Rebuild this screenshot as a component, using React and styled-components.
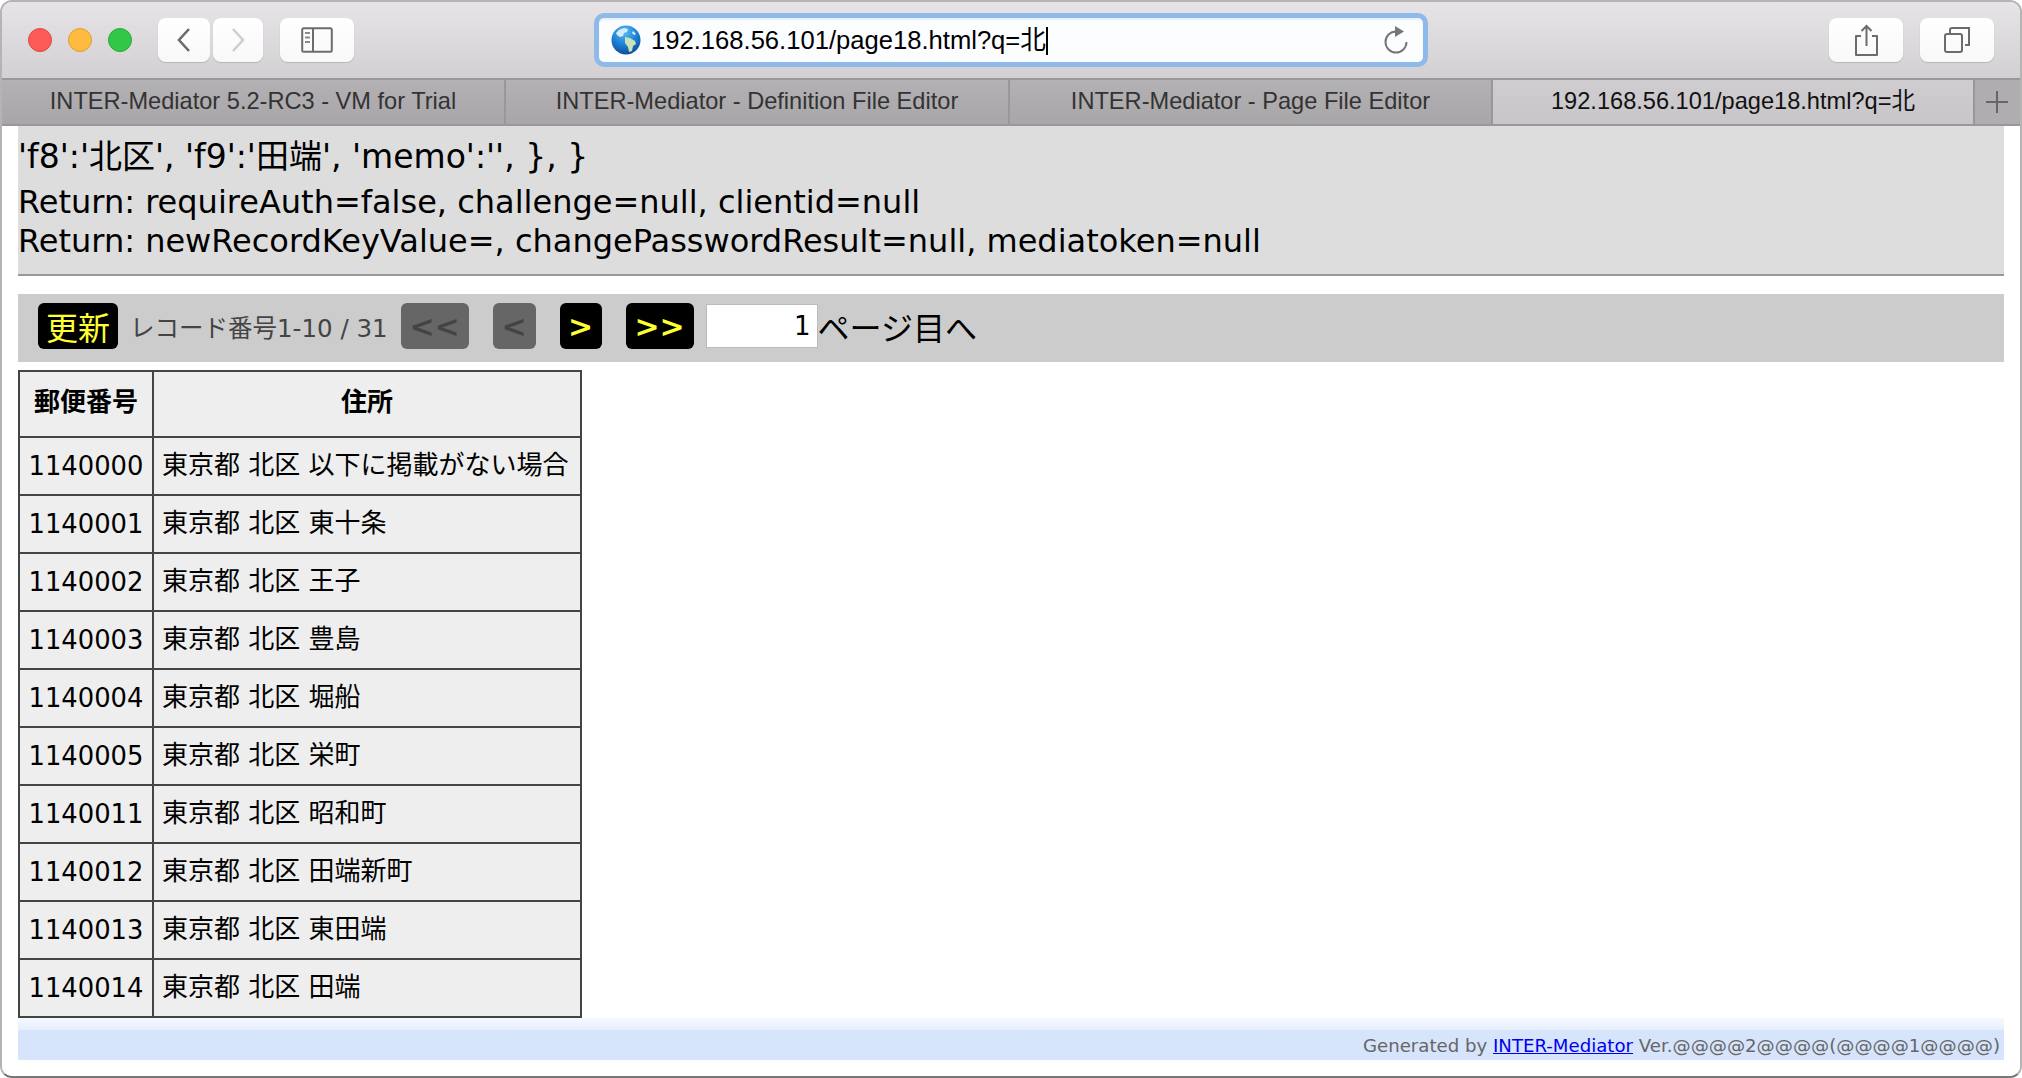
import React from "react";
import styled, { createGlobalStyle } from "styled-components";

const rows = [
  ["1140000", "東京都 北区 以下に掲載がない場合"],
  ["1140001", "東京都 北区 東十条"],
  ["1140002", "東京都 北区 王子"],
  ["1140003", "東京都 北区 豊島"],
  ["1140004", "東京都 北区 堀船"],
  ["1140005", "東京都 北区 栄町"],
  ["1140011", "東京都 北区 昭和町"],
  ["1140012", "東京都 北区 田端新町"],
  ["1140013", "東京都 北区 東田端"],
  ["1140014", "東京都 北区 田端"],
];

const tabs = [
  { title: "INTER-Mediator 5.2-RC3 - VM for Trial", width: 504 },
  { title: "INTER-Mediator - Definition File Editor", width: 504 },
  { title: "INTER-Mediator - Page File Editor", width: 483 },
  { title: "192.168.56.101/page18.html?q=北", width: 482, active: true },
];

function Globe() {
  return (
    <svg width="30" height="30" viewBox="0 0 30 30">
      <defs>
        <radialGradient id="sea" cx="45%" cy="22%" r="85%">
          <stop offset="0" stopColor="#58bdf5" />
          <stop offset="0.55" stopColor="#1a7cd4" />
          <stop offset="1" stopColor="#0b4488" />
        </radialGradient>
      </defs>
      <circle cx="15" cy="15" r="14.5" fill="url(#sea)" />
      <path d="M8 5c3-2 7-2 9-1l-1 3-3 1-1 3-3 1-3-2-1-2z" fill="#d8ecf8" />
      <path d="M14 12l5 1 5 3 1 3-3 2-1 5-3 1-1-5-3-4z" fill="#c9e2b8" />
      <path d="M22 6l3 3-2 1-2-2z" fill="#d8ecf8" />
    </svg>
  );
}

export default function App() {
  return (
    <>
      <GlobalStyle />
      <Window>
        <TitleBar>
          <Lights>
            <Light color="#fc5b57" edge="#df4744" />
            <Light color="#fdbb40" edge="#de9f34" />
            <Light color="#33c748" edge="#27aa35" />
          </Lights>
          <NavGroup>
            <ToolButton width="52px">
              <svg width="20" height="30" viewBox="0 0 20 30">
                <path d="M15 4 5 15l10 11" fill="none" stroke="#6c6c6c" strokeWidth="2.6" />
              </svg>
            </ToolButton>
            <ToolButton width="50px">
              <svg width="20" height="30" viewBox="0 0 20 30">
                <path d="M5 4l10 11L5 26" fill="none" stroke="#cfcfcf" strokeWidth="2.6" />
              </svg>
            </ToolButton>
          </NavGroup>
          <ToolButton width="74px">
            <svg width="32" height="26" viewBox="0 0 32 26">
              <rect x="1.200" y="1.200" width="29.600" height="23.600" rx="1.500" fill="none" stroke="#6c6c6c" strokeWidth="2" />
              <path d="M12 1v24" stroke="#6c6c6c" strokeWidth="2" />
              <path d="M4 6h5M4 10.500h5M4 15h5" stroke="#8a8a8a" strokeWidth="2" />
            </svg>
          </ToolButton>
          <AddressBar>
            <Globe />
            <AddressText>192.168.56.101/page18.html?q=北<Caret /></AddressText>
            <svg width="26" height="30" viewBox="0 0 26 30">
              <path d="M13 6.500A10.500 10.500 0 1 0 23.500 17" fill="none" stroke="#777" strokeWidth="2" />
              <path d="M12 1v11l9-5.500z" fill="#777" />
            </svg>
          </AddressBar>
          <RightTools>
            <ToolButton width="74px">
              <svg width="24" height="32" viewBox="0 0 24 32">
                <path d="M7 12H2v19h21V12h-5" fill="none" stroke="#6c6c6c" strokeWidth="2" strokeLinejoin="round" />
                <path d="M12.500 22V2M7.500 7l5-5 5 5" fill="none" stroke="#6c6c6c" strokeWidth="2" />
              </svg>
            </ToolButton>
            <ToolButton width="74px">
              <svg width="26" height="26" viewBox="0 0 26 26">
                <rect x="1" y="7" width="17" height="18" rx="2" fill="none" stroke="#6c6c6c" strokeWidth="2" />
                <path d="M6 6V3q0-2 2-2h17v17h-4" fill="none" stroke="#6c6c6c" strokeWidth="2" />
              </svg>
            </ToolButton>
          </RightTools>
        </TitleBar>
        <TabBar>
          {tabs.map((tab) => (
            <Tab key={tab.title} width={tab.width} $active={tab.active}>
              {tab.title}
            </Tab>
          ))}
          <NewTab>
            <svg width="22" height="22" viewBox="0 0 22 22">
              <path d="M11 0v22M0 11h22" stroke="#666" strokeWidth="2" />
            </svg>
          </NewTab>
        </TabBar>
        <Page>
          <DebugPanel>
            <DebugFirst>'f8':'北区', 'f9':'田端', 'memo':'', }, }</DebugFirst>
            <DebugLine>Return: requireAuth=false, challenge=null, clientid=null</DebugLine>
            <DebugLine>Return: newRecordKeyValue=, changePasswordResult=null, mediatoken=null</DebugLine>
          </DebugPanel>
          <Navigator>
            <NavButton $wide="80px" $large>更新</NavButton>
            <RecordInfo>レコード番号1-10 / 31</RecordInfo>
            <NavButton $wide="68px" $off>&lt;&lt;</NavButton>
            <NavButton $wide="43px" $off $gap="24px">&lt;</NavButton>
            <NavButton $wide="42px" $gap="24px">&gt;</NavButton>
            <NavButton $wide="68px" $gap="24px">&gt;&gt;</NavButton>
            <PageInput defaultValue="1" />
            <PageLabel>ページ目へ</PageLabel>
          </Navigator>
          <Grid>
            <thead>
              <tr>
                <HeadCell $first>郵便番号</HeadCell>
                <HeadCell>住所</HeadCell>
              </tr>
            </thead>
            <tbody>
              {rows.map(([zip, address]) => (
                <tr key={zip}>
                  <ZipCell>{zip}</ZipCell>
                  <AddressCell>{address}</AddressCell>
                </tr>
              ))}
            </tbody>
          </Grid>
          <Footer>
            Generated by <FooterLink href="#">INTER-Mediator</FooterLink> Ver.@@@@2@@@@(@@@@1@@@@)
          </Footer>
        </Page>
      </Window>
    </>
  );
}

const GlobalStyle = createGlobalStyle`
  html, body {
    margin: 0;
    padding: 0;
    background: #ffffff;
  }
  * {
    box-sizing: border-box;
  }
`;

const Window = styled.div`
  width: 2022px;
  height: 1078px;
  overflow: hidden;
  background: #fff;
  border: 2px solid #b4b4b4;
  border-bottom-color: #777;
  border-radius: 12px;
  display: flex;
  flex-direction: column;
  font-family: "DejaVu Sans", "Noto Sans CJK JP", sans-serif;
`;

const TitleBar = styled.div`
  height: 76px;
  flex: none;
  display: flex;
  align-items: center;
  padding: 0 26px 0 26px;
  background: linear-gradient(#e6e4e6, #d2d0d2);
`;

const Lights = styled.div`
  display: flex;
  gap: 16px;
  margin-right: 26px;
`;

const Light = styled.span`
  width: 24px;
  height: 24px;
  border-radius: 50%;
  background: ${(props) => props.color};
  border: 1px solid ${(props) => props.edge};
`;

const NavGroup = styled.div`
  display: flex;
  gap: 3px;
  margin-right: 17px;
`;

const ToolButton = styled.div`
  width: ${(props) => props.width};
  height: 44px;
  display: flex;
  align-items: center;
  justify-content: center;
  background: linear-gradient(#ffffff, #f8f8f8);
  border-radius: 8px;
  box-shadow: 0 1px 1px #b5b5b5;
`;

const AddressBar = styled.div`
  width: 834px;
  height: 54px;
  margin-left: 240px;
  display: flex;
  align-items: center;
  gap: 10px;
  padding: 0 14px 0 12px;
  background: #fcfdfe;
  border: 5px solid #8ebae9;
  border-radius: 10px;
  box-shadow: inset 0 2px 2px #e6f0fb;
`;

const AddressText = styled.div`
  flex: 1;
  font: 25.600px/1 "Liberation Sans", "Noto Sans CJK JP", sans-serif;
  color: #000;
  display: flex;
  align-items: center;
  padding-top: 2px;
`;

const Caret = styled.span`
  width: 2px;
  height: 28px;
  background: #000;
`;

const RightTools = styled.div`
  display: flex;
  gap: 17px;
  margin-left: auto;
`;

const TabBar = styled.div`
  height: 48px;
  flex: none;
  display: flex;
  background: #afadaf;
  border-top: 2px solid #999;
  border-bottom: 2px solid #999;
`;

const Tab = styled.div`
  width: ${(props) => props.width}px;
  display: flex;
  align-items: center;
  justify-content: center;
  font: 23.600px/1 "Liberation Sans", "Noto Sans CJK JP", sans-serif;
  color: ${(props) => (props.$active ? "#111" : "#333")};
  background: ${(props) => (props.$active ? "linear-gradient(#cfcdcf, #c8c6c8)" : "linear-gradient(#b3b1b3, #a8a6a8)")};
  border-right: 2px solid #989898;
`;

const NewTab = styled.div`
  flex: 1;
  display: flex;
  align-items: center;
  justify-content: center;
  padding-right: 2px;
`;

const Page = styled.div`
  flex: 1;
  padding: 0 16px 0 16px;
  background: #fff;
`;

const DebugPanel = styled.div`
  height: 150px;
  padding-top: 11px;
  background: #dddddd;
  border-bottom: 2px solid #999;
  color: #000;
`;

const DebugFirst = styled.div`
  font-size: 33px;
  line-height: 40px;
  margin-bottom: 6px;
`;

const DebugLine = styled.div`
  font-size: 32px;
  line-height: 39px;
`;

const Navigator = styled.div`
  height: 68px;
  margin-top: 18px;
  display: flex;
  align-items: center;
  padding: 0 0 4px 20px;
  background: #cccccc;
`;

const NavButton = styled.div`
  width: ${(props) => props.$wide};
  height: 46px;
  margin-left: ${(props) => props.$gap || "0"};
  display: flex;
  align-items: center;
  justify-content: center;
  border-radius: 6px;
  background: ${(props) => (props.$off ? "#666666" : "#000000")};
  color: ${(props) => (props.$off ? "#444444" : "#ffff33")};
  font-size: ${(props) => (props.$large ? "32px" : "30px")};
  font-weight: ${(props) => (props.$large ? "normal" : "bold")};
`;

const RecordInfo = styled.div`
  font-size: 24.500px;
  color: #444;
  margin: 0 13px 0 12px;
  white-space: nowrap;
`;

const PageInput = styled.input`
  width: 112px;
  height: 44px;
  margin-left: 12px;
  padding: 0 6px;
  border: 1px solid #bbb;
  background: #fff;
  text-align: right;
  font-size: 26px;
  line-height: 44px;
  font-family: inherit;
  color: #000;
  outline: none;
`;

const PageLabel = styled.div`
  font-size: 32px;
  color: #000;
  white-space: nowrap;
`;

const Grid = styled.table`
  margin-top: 8px;
  border-collapse: collapse;
  width: 564px;
  table-layout: fixed;
  background: #eeeeee;
  border: 2px solid #444;
  color: #000;
`;

const HeadCell = styled.th`
  width: ${(props) => (props.$first ? "134px" : "auto")};
  height: 66px;
  padding: 0 0 9px;
  border: 2px solid #444;
  font-size: 26px;
  font-weight: bold;
  text-align: center;
`;

const ZipCell = styled.td`
  height: 58px;
  border: 2px solid #444;
  font-size: 25.800px;
  text-align: center;
  white-space: nowrap;
  padding: 0;
`;

const AddressCell = styled.td`
  height: 58px;
  border: 2px solid #444;
  font-size: 26px;
  padding: 0 0 8px 8px;
  white-space: nowrap;
`;

const Footer = styled.div`
  height: 42px;
  padding: 13px 4px 0 0;
  text-align: right;
  font-size: 18.150px;
  line-height: 30px;
  color: #666;
  background: linear-gradient(#f6f9ff, #e6eefd 12px, #d6e4fc 12px);
`;

const FooterLink = styled.a`
  color: #0000ee;
  text-decoration: underline;
`;
